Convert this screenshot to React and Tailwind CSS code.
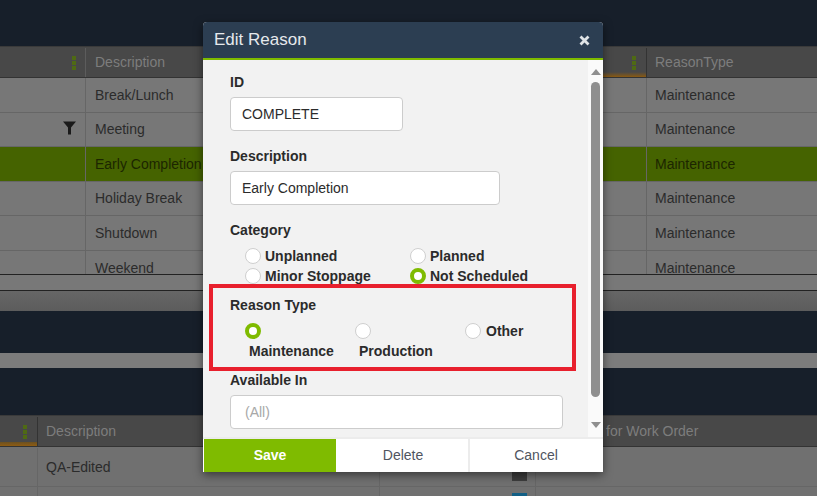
import React from "react";

const topRows = [
  { d: "Break/Lunch", h: "h-[35px]" },
  { d: "Meeting", h: "h-[34px]", filter: true },
  { d: "Early Completion", h: "h-[35px]", sel: true },
  { d: "Holiday Break", h: "h-[34px]" },
  { d: "Shutdown", h: "h-[35px]" },
];

function Dots() {
  return (
    <span className="flex flex-col gap-[1px]">
      <i className="block w-[4px] h-[4px] bg-[#4f6a14]" />
      <i className="block w-[4px] h-[4px] bg-[#4f6a14]" />
      <i className="block w-[4px] h-[4px] bg-[#4f6a14]" />
    </span>
  );
}

function TopRow({ d, h, filter, sel }) {
  return (
    <div className={`flex ${h} border-b border-[#666] ${sel ? "bg-[#456300] text-[#1c2600]" : "bg-[#777] text-[#2b2b2b]"}`}>
      <div className="w-[86px] shrink-0 border-r border-[#666] flex items-center justify-end pr-[9px]">
        {filter && (
          <svg width="13" height="14" viewBox="0 0 13 14" className="mb-[4px]">
            <path d="M0 0.5h13L8 6.5V13.5H5V6.5z" fill="#1a1a1a" />
          </svg>
        )}
      </div>
      <div className="w-[561px] shrink-0 border-r border-[#666] pl-[9px] flex items-center">{d}</div>
      <div className="flex-1 pl-[8px] flex items-center">Maintenance</div>
    </div>
  );
}

function Radio({ on }) {
  return on ? (
    <span className="block w-4 h-4 rounded-full border-[4px] border-[#7fbb00] bg-white shrink-0" />
  ) : (
    <span className="block w-4 h-4 rounded-full border border-[#cfcfcf] bg-white shrink-0" />
  );
}

export default function App() {
  return (
    <div
      className="relative w-[817px] h-[496px] overflow-hidden text-[14px] bg-[#777]"
      style={{ fontFamily: '"Liberation Sans", Arial, sans-serif' }}
    >
      <div className="h-[46px] bg-[#171f2a]" />
      <div className="flex h-[32px] pt-[1px] bg-[#484848] border-t border-[#3a3a3a] border-b border-b-[#333] text-[#7d7d7d]">
        <div className="w-[86px] shrink-0 border-r border-[#5c5c5c] flex items-center justify-end pr-[9px]"><Dots /></div>
        <div className="w-[561px] shrink-0 border-r border-[#333] pl-[9px] flex items-center justify-between pr-[10px] relative">
          <span>Description</span>
          <Dots />
          <span className="absolute right-0 bottom-0 w-[60px] h-[5px] bg-gradient-to-b from-transparent to-[#8a5a12]" />
        </div>
        <div className="flex-1 pl-[8px] flex items-center">ReasonType</div>
      </div>
      {topRows.map((r) => <TopRow key={r.d} {...r} />)}
      <div className="flex h-[24px] border-b border-[#222] text-[#2b2b2b] bg-[#777]">
        <div className="w-[86px] shrink-0 border-r border-[#666]" />
        <div className="w-[561px] shrink-0 border-r border-[#666] pl-[9px] pt-[9px] leading-[16px] overflow-hidden">Weekend</div>
        <div className="flex-1 pl-[8px] pt-[9px] leading-[16px] overflow-hidden">Maintenance</div>
      </div>
      <div className="h-[16px] bg-[#787878] border-b border-[#222]" />
      <div className="h-[20px] bg-gradient-to-b from-[#666] to-[#5c5c5c]" />
      <div className="h-[42px] bg-[#171f2a]" />
      <div className="h-[15px] bg-[#7c7c7c]" />
      <div className="h-[47px] bg-[#171f2a]" />
      <div className="flex h-[32px] pt-[1px] bg-[#484848] border-t border-[#3a3a3a] border-b border-b-[#333] text-[#7d7d7d]">
        <div className="w-[38px] shrink-0 border-r border-[#333] flex items-center justify-end pr-[10px] relative">
          <Dots />
          <span className="absolute left-0 right-0 bottom-0 h-[4px] bg-gradient-to-b from-[#6b5020] to-[#8f5c10]" />
        </div>
        <div className="w-[342px] shrink-0 border-r border-[#333] pl-[8px] flex items-center">Description</div>
        <div className="flex-1 flex items-center pl-[226px]">for Work Order</div>
      </div>
      <div className="flex h-[40px] pt-[1px] border-b border-[#666] bg-[#707070] text-[#2b2b2b]">
        <div className="w-[38px] shrink-0 border-r border-[#666]" />
        <div className="w-[342px] shrink-0 border-r border-[#666] pl-[8px] flex items-center">QA-Edited</div>
        <div className="w-[156px] shrink-0 border-r border-[#666] relative">
          <span className="absolute right-[8px] bottom-[5px] w-[15px] h-[15px] bg-[#3d3d3d]" />
        </div>
      </div>
      <div className="flex h-[10px] bg-[#707070]">
        <div className="w-[38px] shrink-0 border-r border-[#666]" />
        <div className="w-[342px] shrink-0 border-r border-[#666]" />
        <div className="w-[156px] shrink-0 border-r border-[#666] relative">
          <span className="absolute right-[8px] bottom-0 w-[15px] h-[4px] bg-[#135f85]" />
        </div>
      </div>

      {/* modal */}
      <div className="absolute left-[203px] top-[22px] w-[400px] h-[450px] flex flex-col rounded-t-[4px] overflow-hidden bg-white shadow-[0_3px_10px_rgba(0,0,0,0.5)]">
        <div className="h-[36px] bg-[#2c3e52] flex items-center justify-between pl-[11px] pr-[13px] text-[#e6e9ec] text-[17px]">
          <span>Edit Reason</span>
          <svg width="11" height="11" viewBox="0 0 11 11">
            <path d="M1.5 1.5l8 8M9.5 1.5l-8 8" stroke="#dfe3e6" strokeWidth="2.8" />
          </svg>
        </div>
        <div className="h-[2px] bg-[#7fbb00]" />
        <div className="flex-1 flex min-h-0">
          <div className="w-[385px] bg-[#f2f2f2] pl-[27px] text-[#2b2b2b] relative">
            <div className="font-bold mt-[14px] leading-[16px]">ID</div>
            <div className="mt-[7px] w-[173px] h-[34px] bg-white border border-[#ccc] rounded-[4px] pl-[11px] flex items-center">COMPLETE</div>
            <div className="font-bold mt-[17px] leading-[16px]">Description</div>
            <div className="mt-[7px] w-[270px] h-[34px] bg-white border border-[#ccc] rounded-[4px] pl-[11px] flex items-center">Early Completion</div>
            <div className="font-bold mt-[17px] leading-[16px]">Category</div>
            <div className="grid grid-cols-[165px_1fr] mt-[8px] ml-[15px] font-bold leading-[20px]">
              <div className="flex items-center gap-[4px]"><Radio /><span>Unplanned</span></div>
              <div className="flex items-center gap-[4px]"><Radio /><span>Planned</span></div>
              <div className="flex items-center gap-[4px]"><Radio /><span>Minor Stoppage</span></div>
              <div className="flex items-center gap-[4px]"><Radio on /><span>Not Scheduled</span></div>
            </div>
            <div className="font-bold mt-[11px] leading-[16px]">Reason Type</div>
            <div className="grid grid-cols-[110px_110px_1fr] mt-[10px] ml-[15px] font-bold">
              <div className="h-[40px]"><Radio on /><div className="ml-[4px] mt-[2px] leading-[20px]">Maintenance</div></div>
              <div><Radio /><div className="ml-[4px] mt-[2px] leading-[20px]">Production</div></div>
              <div className="flex items-start gap-[5px]"><Radio /><span className="leading-[16px]">Other</span></div>
            </div>
            <div className="font-bold mt-[9px] leading-[16px]">Available In</div>
            <div className="mt-[7px] w-[333px] h-[34px] bg-white border border-[#ccc] rounded-[4px] pl-[14px] flex items-center text-[#a8a8a8]">(All)</div>
          </div>
          <div className="w-[15px] bg-[#fafafa] flex flex-col items-center pt-[9px] pb-[9px]">
            <svg width="10" height="6" viewBox="0 0 10 6"><path d="M5 0L10 6H0z" fill="#8f8f8f" /></svg>
            <div className="w-[9px] h-[315px] mt-[7px] rounded-[5px] bg-[#8f8f8f]" />
            <div className="flex-1" />
            <svg width="10" height="6" viewBox="0 0 10 6"><path d="M0 0h10L5 6z" fill="#8f8f8f" /></svg>
          </div>
        </div>
        <div className="h-[35px] flex border-t-[2px] border-[#ececec] pr-[1px] text-[#50555f]">
          <div className="w-[132px] ml-[1px] bg-[#7fbb00] text-white font-bold flex items-center justify-center">Save</div>
          <div className="w-[134px] pl-[2px] border-r-[2px] border-[#ececec] flex items-center justify-center">Delete</div>
          <div className="flex-1 flex items-center justify-center">Cancel</div>
        </div>
      </div>

      {/* annotation */}
      <div className="absolute left-[209px] top-[284px] w-[367px] h-[87px] border-[4px] border-[#e8202d]" />
    </div>
  );
}
